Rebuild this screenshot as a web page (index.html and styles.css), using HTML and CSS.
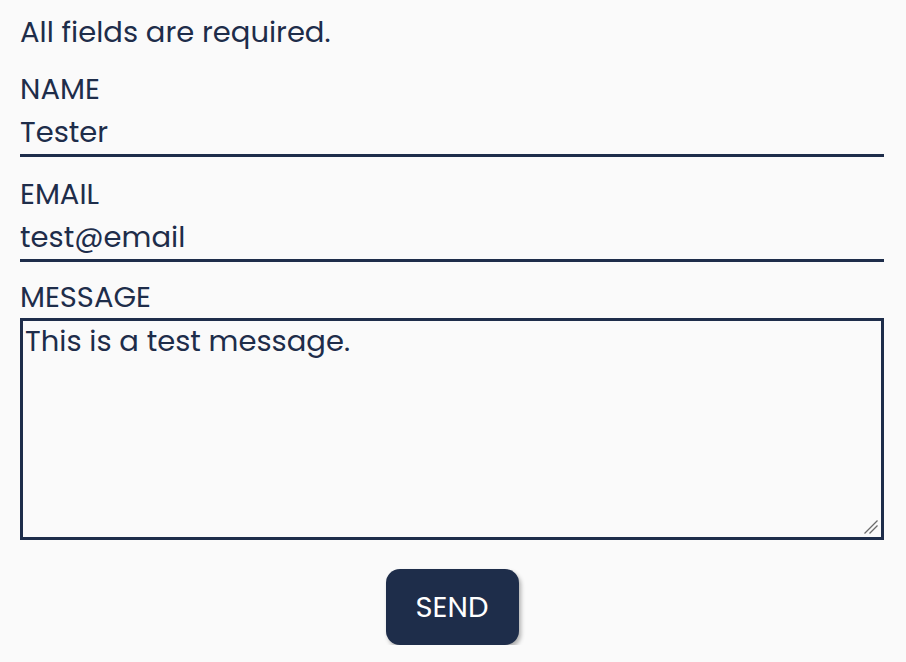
FILE: index.html
```html
<!DOCTYPE html>
<html lang="en">
<head>
<meta charset="utf-8">
<title>Contact</title>
<link rel="stylesheet" href="styles.css">
</head>
<body>
<form class="contact-form">
  <p class="note">All fields are required.</p>
  <div class="field">
    <label class="field-label" for="name">NAME</label>
    <input class="field-input" id="name" type="text" value="Tester">
  </div>
  <div class="field">
    <label class="field-label" for="email">EMAIL</label>
    <input class="field-input" id="email" type="text" value="test@email">
  </div>
  <div class="field">
    <label class="field-label field-label--area" for="message">MESSAGE</label>
    <div class="area-wrap">
      <textarea class="field-area" id="message">This is a test message.</textarea>
      <svg class="grip" width="16" height="16" viewBox="0 0 16 16" aria-hidden="true">
        <line x1="1.5" y1="14.5" x2="14.5" y2="1.5" stroke="#6b6b6b" stroke-width="1.3"/>
        <line x1="6.5" y1="14.5" x2="14.5" y2="6.5" stroke="#6b6b6b" stroke-width="1.3"/>
      </svg>
    </div>
  </div>
  <div class="actions">
    <button class="send-btn" type="button">SEND</button>
  </div>
</form>
</body>
</html>
```
FILE: styles.css
```css
html, body {
  margin: 0;
  padding: 0;
  background: #fafafa;
}

body {
  font-family: "Poppins", Inter, "Open Sans", sans-serif;
  color: #1e2d4a;
}

.contact-form {
  width: 864px;
  margin: 0 0 0 20px;
  display: flex;
  flex-direction: column;
}

.note {
  margin: 0;
  padding-top: 12px;
  font-size: 29px;
  line-height: 40px;
}

.field {
  display: flex;
  flex-direction: column;
}

.field-label {
  font-size: 29px;
  line-height: 42px;
  margin-top: 16px;
}

.field-label--area {
  margin-top: 14px;
}

.field-input {
  font-family: inherit;
  font-size: 29px;
  color: #1e2d4a;
  background: transparent;
  border: none;
  border-bottom: 3px solid #1e2d4a;
  padding: 0;
  margin: 0;
  height: 44px;
  line-height: 40px;
  outline: none;
}

.area-wrap {
  position: relative;
  display: flex;
}

.field-area {
  flex: 1;
  font-family: inherit;
  font-size: 29px;
  line-height: 40px;
  color: #1e2d4a;
  background: transparent;
  border: 3px solid #1e2d4a;
  padding: 0 2px;
  margin: 0;
  height: 222px;
  box-sizing: border-box;
  outline: none;
  resize: none;
}

.grip {
  position: absolute;
  right: 5px;
  bottom: 5px;
}

.actions {
  display: flex;
  justify-content: center;
  margin-top: 29px;
}

.send-btn {
  width: 133px;
  height: 76px;
  border: none;
  border-radius: 14px;
  background: #1e2d4a;
  color: #ffffff;
  font-family: inherit;
  font-size: 29px;
  padding: 0;
  box-shadow: 2px 3px 4px rgba(0, 0, 0, 0.3);
  cursor: pointer;
}
```
